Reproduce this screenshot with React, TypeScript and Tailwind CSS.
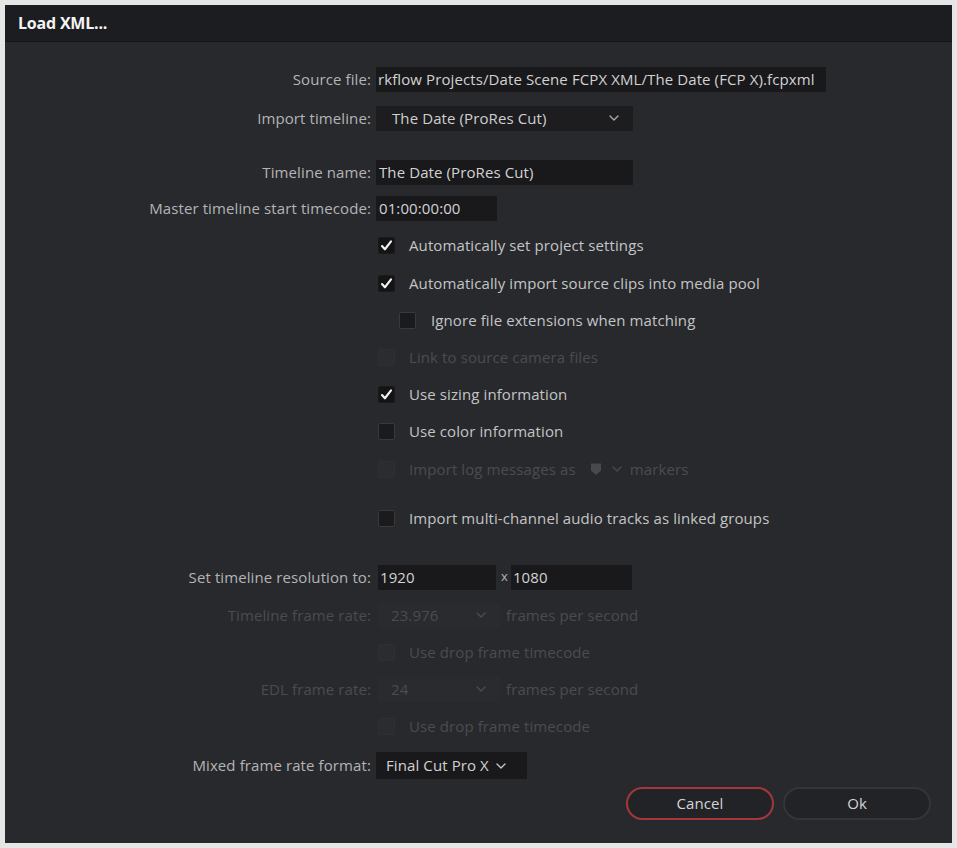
import React from 'react';

const font = { fontFamily: '"Open Sans", "Noto Sans", sans-serif' };

function Chevron({ className = '' }: { className?: string }) {
  return (
    <svg viewBox="0 0 10 6" className={`h-[6px] w-[10px] ${className}`} fill="none">
      <path d="M1 1l4 4 4-4" stroke="currentColor" strokeWidth="1.4" strokeLinecap="round" strokeLinejoin="round" />
    </svg>
  );
}

function Box({ checked, disabled, className = '' }: { checked?: boolean; disabled?: boolean; className?: string }) {
  const tone = disabled
    ? 'bg-[#2b2c2f] border-[#2e2f32]'
    : checked
      ? 'bg-[#141415] border-[#1a1a1b]'
      : 'bg-[#1b1b1d] border-[#38393c]';
  return (
    <span className={`flex h-[17px] w-[17px] shrink-0 items-center justify-center rounded-[2px] border ${tone} ${className}`}>
      {checked && (
        <svg viewBox="0 0 16 16" className="h-[15px] w-[15px]" fill="none">
          <path d="M3.2 8.6l3.1 3.4L12.8 3.6" stroke="#f2f2f2" strokeWidth="2.3" strokeLinecap="round" strokeLinejoin="round" />
        </svg>
      )}
    </span>
  );
}

function Label({ children, disabled }: { children: React.ReactNode; disabled?: boolean }) {
  return (
    <span className={`w-[366px] shrink-0 text-right ${disabled ? 'text-[#4b4c50]' : 'text-[#b4b4b6]'}`}>{children}</span>
  );
}

function CheckRow({
  label,
  checked,
  disabled,
  indent,
  className = '',
}: {
  label: React.ReactNode;
  checked?: boolean;
  disabled?: boolean;
  indent?: boolean;
  className?: string;
}) {
  return (
    <div className={`flex h-[26px] items-center ${indent ? 'pl-[394px]' : 'pl-[373px]'} ${className}`}>
      <Box checked={checked} disabled={disabled} />
      <span className={`${indent ? 'ml-[15px]' : 'ml-[14px]'} ${disabled ? 'text-[#4b4c50]' : 'text-[#c4c4c6]'}`}>{label}</span>
    </div>
  );
}

export default function App() {
  return (
    <div className="h-[848px] w-[957px] bg-[#e6e6e6] p-[5px] text-[15px] tracking-[0.1px]" style={font}>
      <div className="flex h-[838px] w-[947px] flex-col overflow-hidden bg-[#28292c]">
        <div className="flex h-[37px] shrink-0 items-center border-b border-[#161618] bg-[#1c1d20] pl-[13px]">
          <span className="text-[16px] font-bold tracking-[-0.2px] text-[#f4f4f4]">Load XML...</span>
        </div>

        <div className="flex flex-col">
          <div className="mt-[24px] flex h-[26px] items-center">
            <Label>Source file:</Label>
            <div className="ml-[5px] flex h-[25px] w-[450px] items-center overflow-hidden whitespace-nowrap bg-[#19191b] pl-[2px] text-[#d2d2d4]">
              rkflow Projects/Date Scene FCPX XML/The Date (FCP X).fcpxml
            </div>
          </div>

          <div className="mt-[13px] flex h-[26px] items-center">
            <Label>Import timeline:</Label>
            <div className="ml-[5px] flex h-[25px] w-[257px] items-center justify-between bg-[#1d1d1f] pl-[16px] pr-[14px] text-[#cfcfd1]">
              <span>The Date (ProRes Cut)</span>
              <Chevron className="h-[5px] w-[9px] text-[#a8a8aa]" />
            </div>
          </div>

          <div className="mt-[28px] flex h-[26px] items-center">
            <Label>Timeline name:</Label>
            <div className="ml-[5px] flex h-[25px] w-[257px] items-center bg-[#19191b] pl-[3px] text-[#d2d2d4]">
              The Date (ProRes Cut)
            </div>
          </div>

          <div className="mt-[10px] flex h-[26px] items-center">
            <Label>Master timeline start timecode:</Label>
            <div className="ml-[5px] flex h-[25px] w-[121px] items-center bg-[#19191b] pl-[3px] text-[#d2d2d4]">
              01:00:00:00
            </div>
          </div>

          <CheckRow className="mt-[11px]" checked label="Automatically set project settings" />
          <CheckRow className="mt-[12px]" checked label="Automatically import source clips into media pool" />
          <CheckRow className="mt-[11px]" indent label="Ignore file extensions when matching" />
          <CheckRow className="mt-[11px]" disabled label="Link to source camera files" />
          <CheckRow className="mt-[11px]" checked label="Use sizing information" />
          <CheckRow className="mt-[11px]" label="Use color information" />
          <CheckRow
            className="mt-[12px]"
            disabled
            label={
              <span className="flex items-center">
                Import log messages as
                <svg viewBox="0 0 12 14" className="ml-[14px] h-[14px] w-[12px]">
                  <path d="M1 1.5h10v7L6 13 1 8.5z" fill="#48494d" />
                </svg>
                <Chevron className="ml-[10px] text-[#48494d]" />
                <span className="ml-[8px]">markers</span>
              </span>
            }
          />
          <CheckRow className="mt-[23px]" label="Import multi-channel audio tracks as linked groups" />

          <div className="mt-[33px] flex h-[26px] items-center">
            <Label>Set timeline resolution to:</Label>
            <div className="ml-[7px] flex h-[25px] w-[118px] items-center bg-[#19191b] pl-[2px] text-[#d2d2d4]">1920</div>
            <span className="ml-[5px] text-[13px] text-[#b4b4b6]">x</span>
            <div className="ml-[3px] flex h-[25px] w-[121px] items-center bg-[#19191b] pl-[2px] text-[#d2d2d4]">1080</div>
          </div>

          <div className="mt-[12px] flex h-[26px] items-center">
            <Label disabled>Timeline frame rate:</Label>
            <div className="ml-[7px] flex h-[25px] w-[122px] items-center justify-between bg-[#2a2b2e] pl-[13px] pr-[14px] text-[#4b4c50]">
              <span>23.976</span>
              <Chevron className="text-[#4b4c50]" />
            </div>
            <span className="ml-[6px] text-[#4b4c50]">frames per second</span>
          </div>

          <CheckRow className="mt-[11px]" disabled label="Use drop frame timecode" />

          <div className="mt-[11px] flex h-[26px] items-center">
            <Label disabled>EDL frame rate:</Label>
            <div className="ml-[7px] flex h-[25px] w-[122px] items-center justify-between bg-[#2a2b2e] pl-[13px] pr-[14px] text-[#4b4c50]">
              <span>24</span>
              <Chevron className="text-[#4b4c50]" />
            </div>
            <span className="ml-[6px] text-[#4b4c50]">frames per second</span>
          </div>

          <CheckRow className="mt-[11px]" disabled label="Use drop frame timecode" />

          <div className="mt-[13px] flex h-[27px] items-center">
            <Label>Mixed frame rate format:</Label>
            <div className="ml-[5px] flex h-[27px] w-[151px] items-center bg-[#19191b] pl-[10px] text-[#d2d2d4]">
              <span>Final Cut Pro X</span>
              <Chevron className="ml-[7px] text-[#c4c4c6]" />
            </div>
          </div>

          <div className="mt-[8px] flex items-center pl-[621px]">
            <button className="flex h-[33px] w-[148px] items-center justify-center rounded-full border-2 border-[#a3373a] bg-[#222326] text-[#d4d4d6]">
              Cancel
            </button>
            <button className="ml-[9px] flex h-[33px] w-[148px] items-center justify-center rounded-full border-2 border-[#343538] bg-[#222326] text-[#d4d4d6]">
              Ok
            </button>
          </div>
        </div>
      </div>
    </div>
  );
}
